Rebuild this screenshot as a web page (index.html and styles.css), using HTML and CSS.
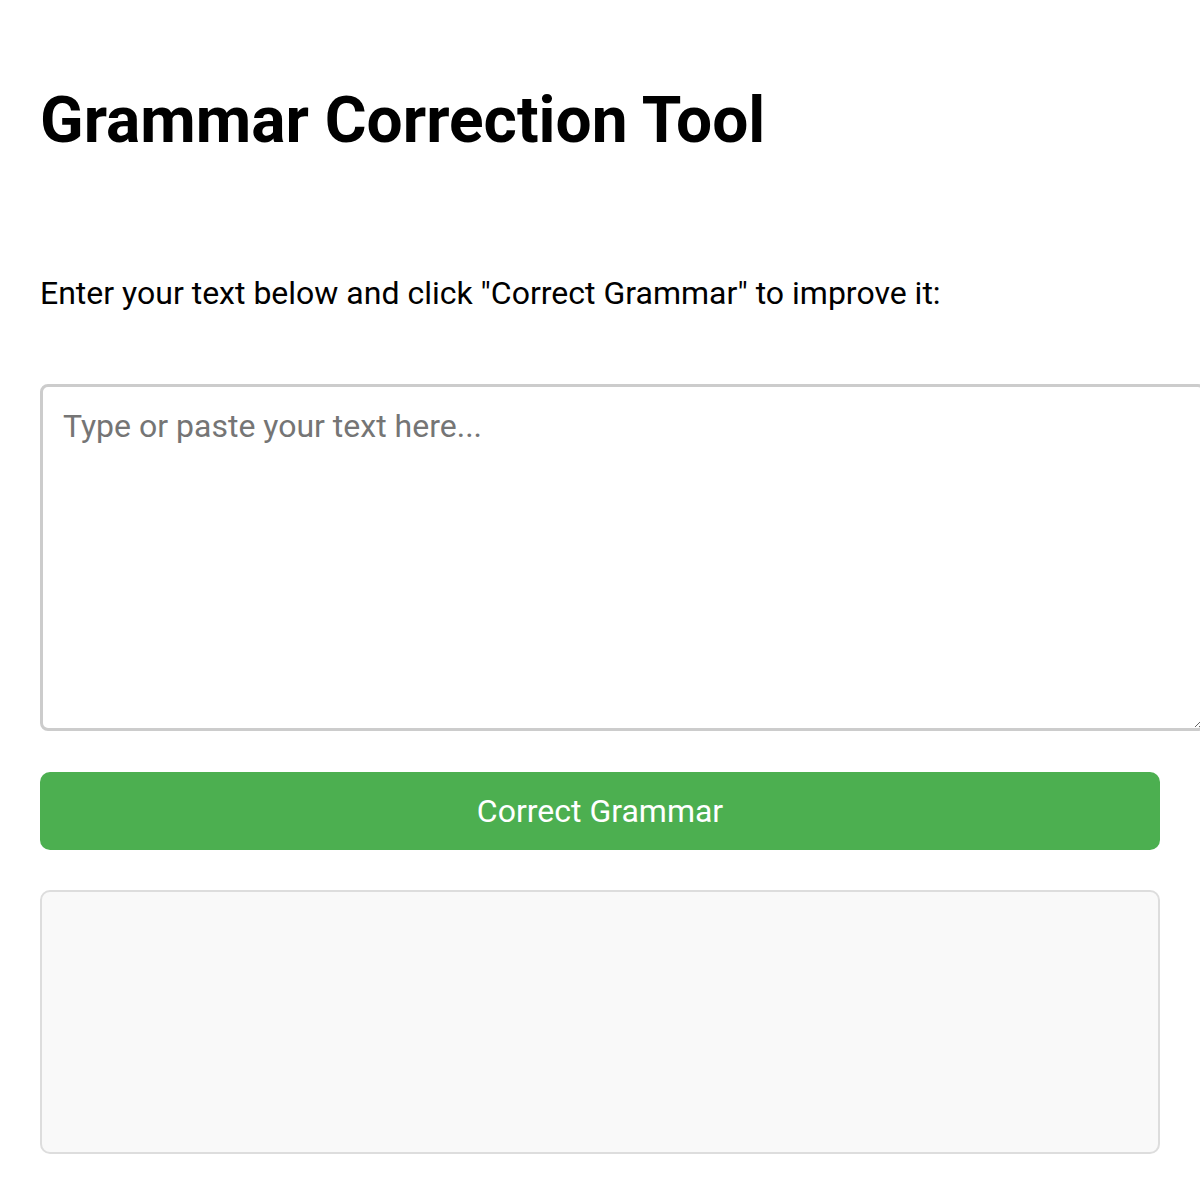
FILE: index.html
```html
<!DOCTYPE html>
<html lang="en">
<head>
<meta charset="utf-8">
<title>Grammar Correction Tool</title>
<link rel="stylesheet" href="styles.css">
</head>
<body>
<div class="container">
  <h1 class="title">Grammar Correction Tool</h1>
  <p class="intro">Enter your text below and click "Correct Grammar" to improve it:</p>
  <textarea class="input" placeholder="Type or paste your text here..."></textarea>
  <button class="btn">Correct Grammar</button>
  <div class="result"></div>
</div>
</body>
</html>
```

FILE: styles.css
```css
html, body {
  margin: 0;
  padding: 0;
  background: #ffffff;
}
body {
  font-family: Roboto, "Liberation Sans", Arial, sans-serif;
  font-size: 32px;
  color: #000;
}
.container {
  padding: 40px;
  width: 1120px;
}
.title {
  font-size: 64px;
  font-weight: 700;
  margin: 43px 0 0 0;
  line-height: normal;
}
.intro {
  margin: 116px 0 0 0;
  line-height: normal;
}
.input {
  display: block;
  margin: 72px 0 0 0;
  width: 100%;
  height: 301px;
  padding: 20px;
  border: 3px solid #cccccc;
  border-radius: 8px;
  font-family: Roboto, "Liberation Sans", Arial, sans-serif;
  font-size: 32px;
  line-height: normal;
  color: #000;
  background: #fff;
  outline: none;
}
.input::placeholder {
  color: #757575;
}
.btn {
  display: block;
  width: 100%;
  margin: 41px 0 0 0;
  padding: 20px;
  background: #4caf50;
  color: #ffffff;
  border: none;
  border-radius: 10px;
  font-family: Roboto, "Liberation Sans", Arial, sans-serif;
  font-size: 32px;
  line-height: normal;
  cursor: pointer;
}
.result {
  margin-top: 40px;
  min-height: 200px;
  padding: 30px;
  border: 2px solid #dddddd;
  border-radius: 10px;
  background: #f9f9f9;
}
```
